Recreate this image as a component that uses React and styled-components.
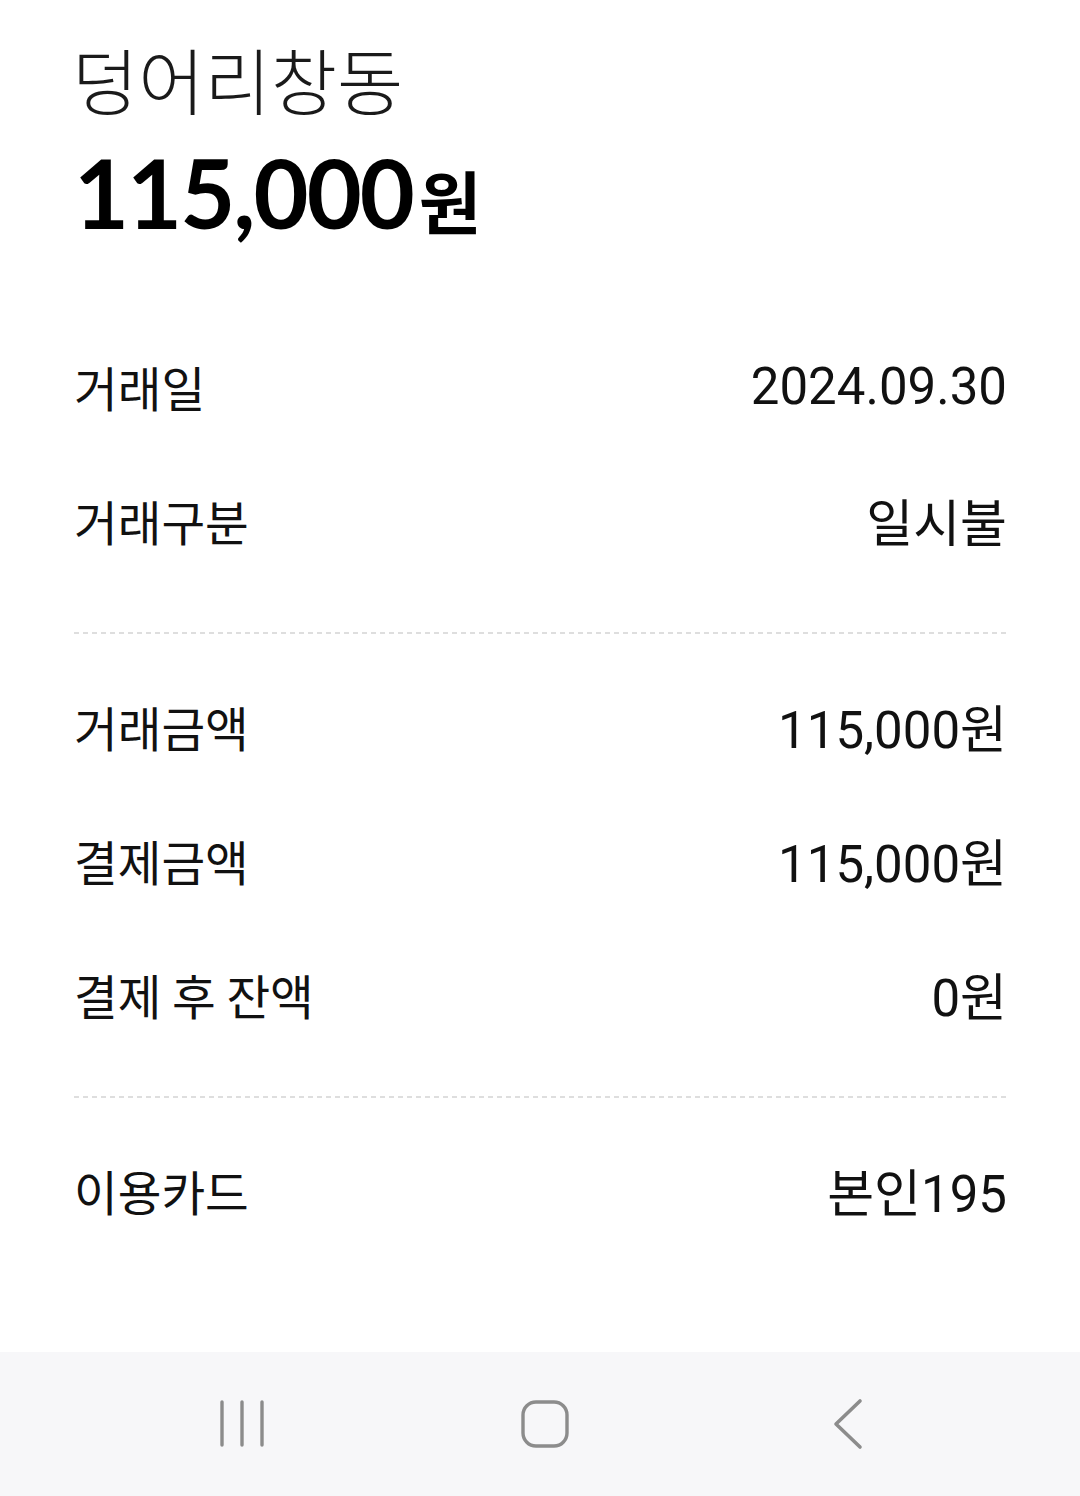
import styled, { createGlobalStyle } from "styled-components";

const GlobalStyle = createGlobalStyle`
  html, body {
    margin: 0;
    padding: 0;
    background: #ffffff;
  }
  body {
    font-family: "Lato", "Noto Sans CJK KR", sans-serif;
    color: #111111;
  }
`;

const Page = styled.div`
  width: 1080px;
  min-height: 1496px;
  display: flex;
  flex-direction: column;
  box-sizing: border-box;
`;

const Content = styled.div`
  flex: 1;
  padding: 0 73px 0 74px;
`;

const Header = styled.div`
  padding-top: 32px;
  display: flex;
  flex-direction: column;
`;

const StoreName = styled.div`
  font-family: "Noto Sans CJK KR", sans-serif;
  font-weight: 300;
  font-size: 72px;
  line-height: 92px;
  margin-left: -2px;
  color: #1a1a1a;
`;

const Amount = styled.div`
  display: flex;
  align-items: baseline;
  margin-top: 20px;
  line-height: 96px;
`;

const AmountNum = styled.span`
  font-family: "Lato", sans-serif;
  font-weight: 700;
  font-size: 95px;
  letter-spacing: -2px;
  color: #000;
`;

const AmountUnit = styled.span`
  font-family: "Noto Sans CJK KR", sans-serif;
  font-weight: 700;
  font-size: 68px;
  margin-left: 6px;
  color: #000;
`;

const Section = styled.div`
  display: flex;
  flex-direction: column;
  margin-top: ${(p) => p.$top || 0}px;
`;

const Row = styled.div`
  height: 134px;
  display: flex;
  justify-content: space-between;
  align-items: center;
`;

const Label = styled.span`
  font-family: "Noto Sans CJK KR", sans-serif;
  font-weight: 400;
  font-size: 47.5px;
  color: #111;
`;

const Value = styled.span`
  font-family: "Roboto", "Noto Sans CJK KR", sans-serif;
  font-weight: 400;
  font-size: 51px;
  color: #111;
`;

const Divider = styled.div`
  height: 2px;
  margin: ${(p) => p.$top}px 0 25px;
  background-image: linear-gradient(to right, #dedede 60%, transparent 60%);
  background-size: 9px 2px;
  background-repeat: repeat-x;
`;

const NavBar = styled.div`
  height: 144px;
  background: #f7f7f9;
  display: flex;
  align-items: center;
  justify-content: space-between;
  padding: 0 172px 0 182px;
`;

const NavButton = styled.div`
  width: 120px;
  height: 80px;
  display: flex;
  align-items: center;
  justify-content: center;
`;

const details = [
  [
    ["거래일", "2024.09.30"],
    ["거래구분", "일시불"],
  ],
  [
    ["거래금액", "115,000원"],
    ["결제금액", "115,000원"],
    ["결제 후 잔액", "0원"],
  ],
  [["이용카드", "본인195"]],
];

const dividerTops = [45, 35];

export default function App() {
  return (
    <>
      <GlobalStyle />
      <Page>
        <Content>
          <Header>
            <StoreName>덩어리창동</StoreName>
            <Amount>
              <AmountNum>115,000</AmountNum>
              <AmountUnit>원</AmountUnit>
            </Amount>
          </Header>
          {details.map((group, i) => (
            <div key={i}>
              <Section $top={i === 0 ? 71 : 0}>
                {group.map(([label, value]) => (
                  <Row key={label}>
                    <Label>{label}</Label>
                    <Value>{value}</Value>
                  </Row>
                ))}
              </Section>
              {i < details.length - 1 && <Divider $top={dividerTops[i]} />}
            </div>
          ))}
        </Content>
        <NavBar>
          <NavButton>
            <svg width="46" height="48" viewBox="0 0 46 48">
              <g stroke="#8c8c8c" strokeWidth="3.4" strokeLinecap="round">
                <line x1="3" y1="2" x2="3" y2="45" />
                <line x1="23" y1="2" x2="23" y2="45" />
                <line x1="43" y1="2" x2="43" y2="45" />
              </g>
            </svg>
          </NavButton>
          <NavButton>
            <svg width="50" height="50" viewBox="0 0 50 50">
              <rect
                x="3"
                y="3"
                width="44"
                height="44"
                rx="13"
                fill="none"
                stroke="#8c8c8c"
                strokeWidth="3.4"
              />
            </svg>
          </NavButton>
          <NavButton>
            <svg width="32" height="52" viewBox="0 0 32 52">
              <polyline
                points="28,3 4,26 28,49"
                fill="none"
                stroke="#8c8c8c"
                strokeWidth="3.6"
                strokeLinecap="round"
                strokeLinejoin="round"
              />
            </svg>
          </NavButton>
        </NavBar>
      </Page>
    </>
  );
}
